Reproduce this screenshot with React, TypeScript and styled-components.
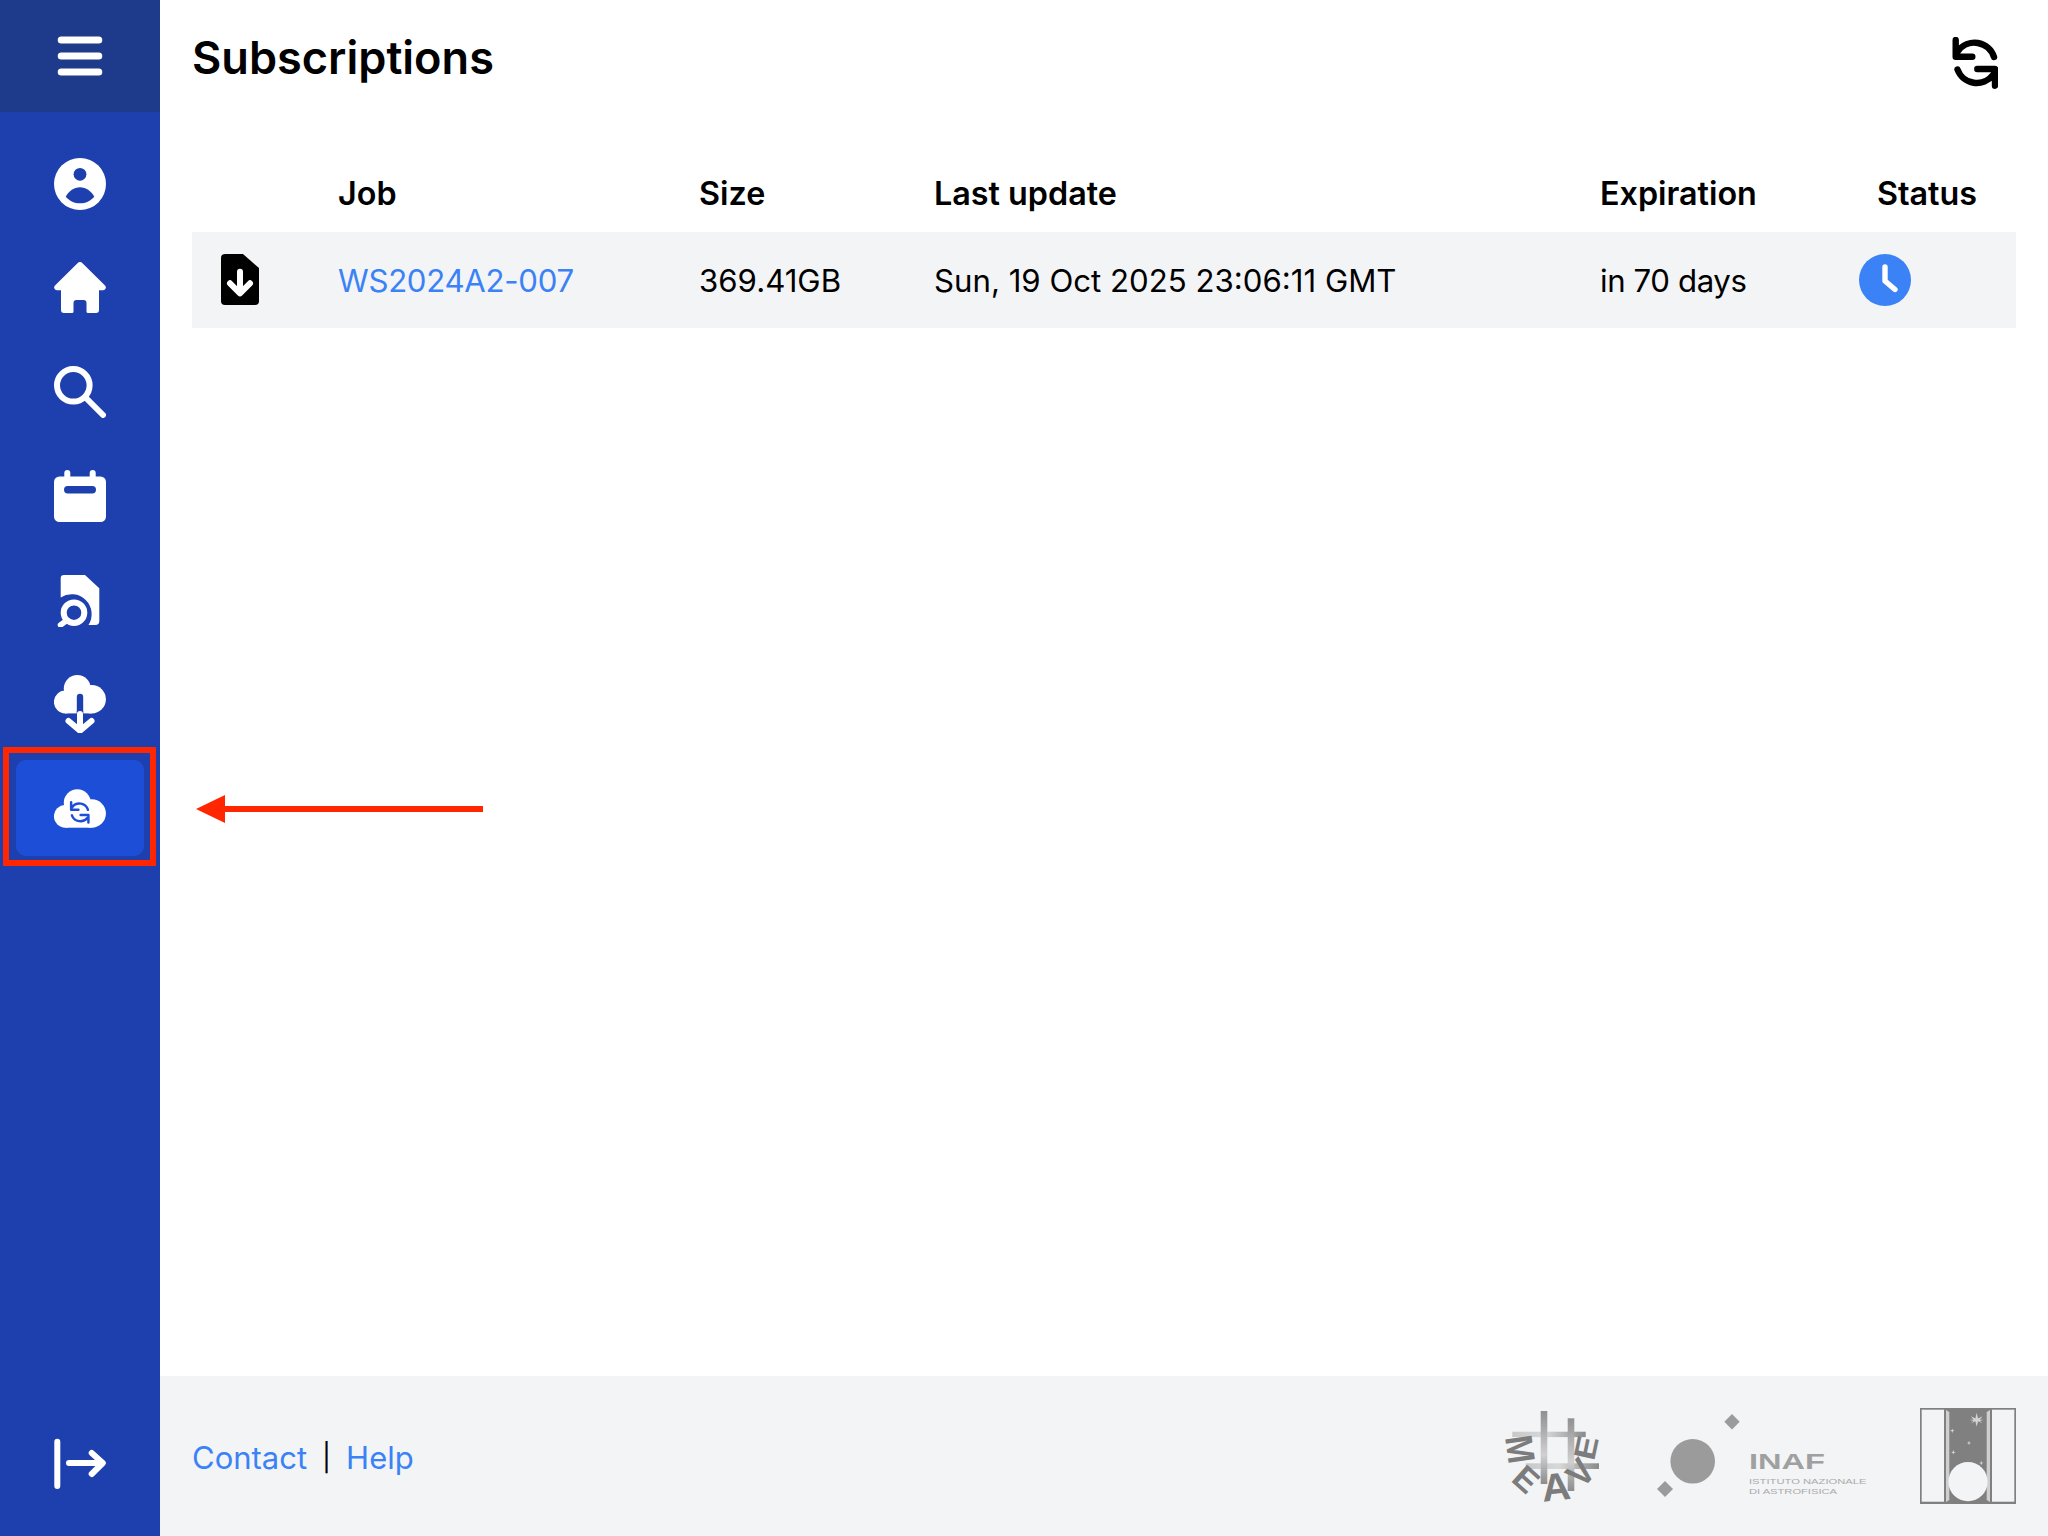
import React from "react";
import styled, { createGlobalStyle } from "styled-components";

const Global = createGlobalStyle`
  html, body { margin: 0; padding: 0; background: #fff; }
  body { font-family: Inter, "Liberation Sans", sans-serif; color: #000; }
  * { box-sizing: border-box; }
`;

const Page = styled.div`
  display: flex;
  width: 2048px;
  height: 1536px;
  overflow: hidden;
`;

const Sidebar = styled.aside`
  flex: 0 0 160px;
  display: flex;
  flex-direction: column;
  background: #1e40af;
  color: #fff;
`;

const SidebarTop = styled.div`
  height: 112px;
  flex: none;
  display: flex;
  align-items: center;
  justify-content: center;
  background: #1e3a8a;
`;

const Nav = styled.nav`
  flex: 1;
  display: flex;
  flex-direction: column;
  gap: 8px;
  padding: 24px 16px 25px;
`;

const NavItem = styled.a<{ $active?: boolean }>`
  position: relative;
  height: 96px;
  flex: none;
  display: flex;
  align-items: center;
  justify-content: center;
  border-radius: 10px;
  background: ${(p) => (p.$active ? "#1d4ed8" : "transparent")};
`;

const BottomItem = styled(NavItem)`
  margin-top: auto;
`;

const RedFrame = styled.span`
  position: absolute;
  inset: -13px -12px -10px -13px;
  border: 6px solid #ff2600;
`;

const Callout = styled.svg`
  position: absolute;
  left: 180px;
  top: 35px;
`;

const Main = styled.main`
  flex: 1;
  min-width: 0;
  display: flex;
  flex-direction: column;
`;

const Content = styled.section`
  flex: 1;
  padding: 0 32px;
`;

const TitleBar = styled.header`
  height: 112px;
  display: flex;
  align-items: center;
  justify-content: space-between;
`;

const Title = styled.h1`
  margin: 0;
  padding-top: 3px;
  font-size: 45.1px;
  line-height: 56px;
  font-weight: 600;
`;

const RefreshButton = styled.button`
  border: 0;
  padding: 0 18px 0 0;
  margin-top: 14px;
  background: none;
  display: flex;
  color: #000;
`;

const columns = "146px 361px 235px 666px 259px 157px";

const HeadRow = styled.div`
  display: grid;
  grid-template-columns: ${columns};
  height: 120px;
  align-items: end;
  padding-bottom: 14px;
`;

const HeadCell = styled.div<{ $pad?: number }>`
  font-size: 32.3px;
  line-height: 48px;
  font-weight: 600;
  white-space: nowrap;
  padding-left: ${(p) => p.$pad ?? 0}px;
`;

const BodyRow = styled.div`
  display: grid;
  grid-template-columns: ${columns};
  height: 96px;
  align-items: center;
  background: #f3f4f6;
`;

const Cell = styled.div<{ $tracking?: number }>`
  font-size: 31.2px;
  line-height: 48px;
  font-weight: 400;
  white-space: nowrap;
  display: flex;
  align-items: center;
  padding-top: 2px;
  letter-spacing: ${(p) => p.$tracking ?? 0}px;
`;

const IconCell = styled(Cell)`
  padding: 0 0 1px 29px;
`;

const StatusCell = styled(Cell)`
  padding-top: 0;
`;

const TextLink = styled.a`
  color: #3b82f6;
  text-decoration: none;
`;

const Footer = styled.footer`
  height: 160px;
  flex: none;
  display: flex;
  align-items: center;
  justify-content: space-between;
  padding: 0 32px;
  background: #f3f4f6;
`;

const FooterLinks = styled.div`
  display: flex;
  align-items: center;
  gap: 15px;
  padding-top: 3px;
  font-size: 31px;
  line-height: 48px;
`;

const Separator = styled.span`
  font-size: 27px;
`;

const Logos = styled.div`
  display: flex;
  align-items: center;
  gap: 53px;
`;

const MeaveSvg = styled.svg`
  margin: -10px;
  flex: none;
`;

const MenuIcon = () => (
  <svg width="52" height="52" viewBox="0 0 52 52" fill="none" stroke="#fff" strokeWidth="7" strokeLinecap="round">
    <path d="M7.2 10H44.8M7.2 26H44.8M7.2 42H44.8" />
  </svg>
);

const UserIcon = () => (
  <svg width="52" height="52" viewBox="0 0 52 52">
    <circle cx="26" cy="26" r="26" fill="#fff" />
    <circle cx="26" cy="16.3" r="6.4" fill="#1e40af" />
    <path d="M11.7 38.7C15 33 20 29.3 26 29.3S37 33 40.3 38.7C36.5 43 31.5 45.3 26 45.3S15.5 43 11.7 38.7Z" fill="#1e40af" />
  </svg>
);

const HomeIcon = () => (
  <svg width="52" height="52" viewBox="0 0 52 52" fill="#fff">
    <path d="M23.5 1.2a3.4 3.4 0 0 1 5 0L51 23.5a2.8 2.8 0 0 1-2 4.8H45V48a3 3 0 0 1-3 3H34a1.5 1.5 0 0 1-1.5-1.5V41a3 3 0 0 0-3-3h-7a3 3 0 0 0-3 3v8.5A1.5 1.5 0 0 1 18 51H10a3 3 0 0 1-3-3V28.3H3a2.8 2.8 0 0 1-2-4.8Z" />
  </svg>
);

const SearchIcon = () => (
  <svg width="52" height="52" viewBox="0 0 52 52" fill="none" stroke="#fff" strokeWidth="6" strokeLinecap="round">
    <circle cx="19.3" cy="19.3" r="16.3" />
    <path d="M31.5 31.5L49 49" />
  </svg>
);

const CalendarIcon = () => (
  <svg width="52" height="52" viewBox="0 0 52 52">
    <path d="M13.3 3V10M38.7 3V10" stroke="#fff" strokeWidth="6" strokeLinecap="round" />
    <rect x="0" y="6.5" width="52" height="45.5" rx="5.5" fill="#fff" />
    <rect x="10" y="16" width="32" height="7.4" rx="3.7" fill="#1e40af" />
  </svg>
);

const DocSearchIcon = () => (
  <svg width="52" height="54" viewBox="0 -2 52 54" fill="none">
    <path d="M10 0H31L45.3 13.3V46a4 4 0 0 1-4 4H34.5A20 20 0 0 0 6.7 22.5V3.3A3.3 3.3 0 0 1 10 0Z" fill="#fff" />
    <circle cx="20" cy="37.7" r="10.3" stroke="#fff" strokeWidth="6" />
    <path d="M12 46L6.5 50" stroke="#fff" strokeWidth="5.6" strokeLinecap="round" />
  </svg>
);

const CloudShape = ({ top }: { top: number }) => (
  <g fill="#fff">
    <circle cx="23.3" cy={top + 13.5} r="13.5" />
    <circle cx="37.7" cy={top + 24.2} r="14.2" />
    <circle cx="11.3" cy={top + 27} r="11.4" />
    <rect x="11.3" y={top + 20} width="26.4" height="18.4" />
  </g>
);

const CloudDownloadIcon = () => (
  <svg width="52" height="58" viewBox="0 0 52 58" fill="none">
    <CloudShape top={0} />
    <path d="M26 22V38.4" stroke="#1e40af" strokeWidth="6.4" strokeLinecap="round" />
    <rect x="22.8" y="36" width="6.4" height="2.4" fill="#1e40af" />
    <path d="M26 39V55M14.5 46L26 55.6L37.5 46" stroke="#fff" strokeWidth="6" strokeLinecap="round" strokeLinejoin="round" />
  </svg>
);

const CloudSyncIcon = () => (
  <svg width="52" height="40" viewBox="0 0 52 40" fill="none">
    <g transform="translate(0 1.3)">
      <CloudShape top={0} />
    </g>
    <g transform="translate(15.5 13) scale(.44)" stroke="#1d4ed8" strokeWidth="5.6" strokeLinecap="round" strokeLinejoin="round">
      <path d="M3.7 3V19.7H20.3M6 14A20.5 20.5 0 0 1 42 20M43 48.7V32H25.3M5.5 32.5A20.5 20.5 0 0 0 41 38" />
    </g>
  </svg>
);

const LogoutIcon = () => (
  <svg width="52" height="52" viewBox="0 0 52 52" fill="none" stroke="#fff" strokeWidth="6" strokeLinecap="round" strokeLinejoin="round">
    <path d="M3.3 4.7V49M15 26H48.5M37.7 16L48.8 26L37.7 37" />
  </svg>
);

const RefreshIcon = () => (
  <svg width="46" height="52" viewBox="0 0 46 52" fill="none" stroke="currentColor" strokeWidth="6.4" strokeLinecap="round" strokeLinejoin="round">
    <path d="M3.7 3V19.7H20.3M6 14A20.5 20.5 0 0 1 42 20M43 48.7V32H25.3M5.5 32.5A20.5 20.5 0 0 0 41 38" />
  </svg>
);

const FileDownloadIcon = () => (
  <svg width="38" height="51" viewBox="0 0 38 51" fill="none">
    <path d="M4 0H22L38 14V47a4 4 0 0 1-4 4H4a4 4 0 0 1-4-4V4A4 4 0 0 1 4 0Z" fill="#000" />
    <path d="M19 17.7V38.5M9 29.3L19 39.3L29 29.3" stroke="#fff" strokeWidth="6" strokeLinecap="round" strokeLinejoin="round" />
  </svg>
);

const ClockIcon = () => (
  <svg width="52" height="52" viewBox="0 0 52 52" fill="none">
    <circle cx="26" cy="26" r="26" fill="#3b82f6" />
    <path d="M26 13V27L36 35.5" stroke="#fff" strokeWidth="5.4" strokeLinecap="round" strokeLinejoin="round" />
  </svg>
);

const meaveLetters: [string, number, number, number, number, number][] = [
  ["M", 14, 38.3, 82, 1.05, 1.2],
  ["E", 20, 68.5, 42, 1.05, 1.05],
  ["A", 50, 75.5, -6, 1.25, 1.22],
  ["V", 74, 61.5, -48, 1.05, 1.15],
  ["E", 80, 36.7, -78, 1.1, 0.95],
];

const MeaveLogo = () => (
  <MeaveSvg width="113" height="110" viewBox="-10 -10 113 110">
    <defs>
      <linearGradient id="mh" x1="0" y1="0" x2="1" y2="0">
        <stop offset="0" stopColor="#c8c8c8" />
        <stop offset=".45" stopColor="#d8d8d8" />
        <stop offset="1" stopColor="#8a8a8a" />
      </linearGradient>
      <linearGradient id="mv" x1="0" y1="0" x2="0" y2="1">
        <stop offset="0" stopColor="#909090" />
        <stop offset=".6" stopColor="#d0d0d0" />
        <stop offset="1" stopColor="#8c8c8c" />
      </linearGradient>
    </defs>
    <rect x="6.3" y="20.7" width="73.4" height="5.4" fill="url(#mh)" />
    <rect x="19.7" y="52.3" width="73.3" height="5.7" fill="url(#mh)" />
    <rect x="34.7" y="0" width="6.6" height="73" fill="url(#mv)" />
    <rect x="61.7" y="7.3" width="6.6" height="72.7" fill="url(#mv)" />
    {meaveLetters.map(([ch, x, y, rot, sx, sy], i) => (
      <text
        key={i}
        fontFamily="Liberation Sans, sans-serif"
        fontWeight="700"
        fontSize="32"
        fill="#7c7c7c"
        textAnchor="middle"
        dominantBaseline="central"
        transform={`translate(${x} ${y}) rotate(${rot}) scale(${sx} ${sy})`}
      >
        {ch}
      </text>
    ))}
  </MeaveSvg>
);

const InafLogo = () => (
  <svg width="215" height="96" viewBox="0 0 215 96">
    <circle cx="40.7" cy="53.3" r="22.3" fill="#9b9b9b" />
    <path d="M80 6L87.7 13.7L80 21.4L72.3 13.7Z" fill="#9b9b9b" />
    <path d="M13 73L21 81L13 89L5 81Z" fill="#9b9b9b" />
    <g fontFamily="Liberation Sans, sans-serif">
      <text x="97" y="61.3" fontSize="22.5" fontWeight="700" fill="#a0a0a0" textLength="76" lengthAdjust="spacingAndGlyphs">INAF</text>
      <text x="97" y="75.7" fontSize="8" fill="#aaaaaa" textLength="117.5" lengthAdjust="spacingAndGlyphs">ISTITUTO NAZIONALE</text>
      <text x="97" y="85.7" fontSize="8" fill="#aaaaaa" textLength="88" lengthAdjust="spacingAndGlyphs">DI ASTROFISICA</text>
    </g>
  </svg>
);

const smallStars: [number, number][] = [[32.3, 22.7], [49, 35], [33.3, 44.3], [61.3, 55]];

const TelescopeLogo = () => (
  <svg width="96" height="96" viewBox="0 0 96 96">
    <rect width="96" height="96" fill="#808080" />
    <rect x="1.7" y="1.7" width="22.3" height="92" fill="#f3f4f6" />
    <rect x="72" y="1.7" width="22.3" height="92" fill="#f3f4f6" />
    <path d="M26 2L29.3 4V92L26 94Z" fill="#cfcfcf" />
    <path d="M70 2L66.7 4V92L70 94Z" fill="#cfcfcf" />
    <circle cx="48" cy="73.7" r="19.6" fill="#f3f4f6" />
    <path d="M56.7 4.7L58 10.4L62.6 8.2L59.8 11.7L63.7 11.7L59.8 13L62.6 15.2L58 13.2L56.7 18.7L55.4 13.2L50.8 15.2L53.6 13L49.7 11.7L53.6 11.7L50.8 8.2L55.4 10.4Z" fill="#d4d4d4" />
    {smallStars.map(([x, y], i) => (
      <path key={i} d={`M${x} ${y - 2.2}L${x + 0.6} ${y - 0.6}L${x + 2.2} ${y}L${x + 0.6} ${y + 0.6}L${x} ${y + 2.2}L${x - 0.6} ${y + 0.6}L${x - 2.2} ${y}L${x - 0.6} ${y - 0.6}Z`} fill="#d4d4d4" />
    ))}
  </svg>
);

export default function App() {
  return (
    <>
      <Global />
      <Page>
        <Sidebar>
          <SidebarTop>
            <MenuIcon />
          </SidebarTop>
          <Nav>
            <NavItem><UserIcon /></NavItem>
            <NavItem><HomeIcon /></NavItem>
            <NavItem><SearchIcon /></NavItem>
            <NavItem><CalendarIcon /></NavItem>
            <NavItem><DocSearchIcon /></NavItem>
            <NavItem><CloudDownloadIcon /></NavItem>
            <NavItem $active>
              <CloudSyncIcon />
              <RedFrame />
              <Callout width="288" height="30" viewBox="0 0 288 30">
                <path d="M0 14L29 0V11H287V17H29V28Z" fill="#ff2600" />
              </Callout>
            </NavItem>
            <BottomItem><LogoutIcon /></BottomItem>
          </Nav>
        </Sidebar>
        <Main>
          <Content>
            <TitleBar>
              <Title>Subscriptions</Title>
              <RefreshButton><RefreshIcon /></RefreshButton>
            </TitleBar>
            <HeadRow>
              <HeadCell />
              <HeadCell>Job</HeadCell>
              <HeadCell>Size</HeadCell>
              <HeadCell>Last update</HeadCell>
              <HeadCell>Expiration</HeadCell>
              <HeadCell $pad={18}>Status</HeadCell>
            </HeadRow>
            <BodyRow>
              <IconCell><FileDownloadIcon /></IconCell>
              <Cell $tracking={-0.3}><TextLink>WS2024A2-007</TextLink></Cell>
              <Cell>369.41GB</Cell>
              <Cell>Sun, 19 Oct 2025 23:06:11 GMT</Cell>
              <Cell $tracking={-0.4}>in 70 days</Cell>
              <StatusCell><ClockIcon /></StatusCell>
            </BodyRow>
          </Content>
          <Footer>
            <FooterLinks>
              <TextLink>Contact</TextLink>
              <Separator>|</Separator>
              <TextLink>Help</TextLink>
            </FooterLinks>
            <Logos>
              <MeaveLogo />
              <InafLogo />
              <TelescopeLogo />
            </Logos>
          </Footer>
        </Main>
      </Page>
    </>
  );
}
